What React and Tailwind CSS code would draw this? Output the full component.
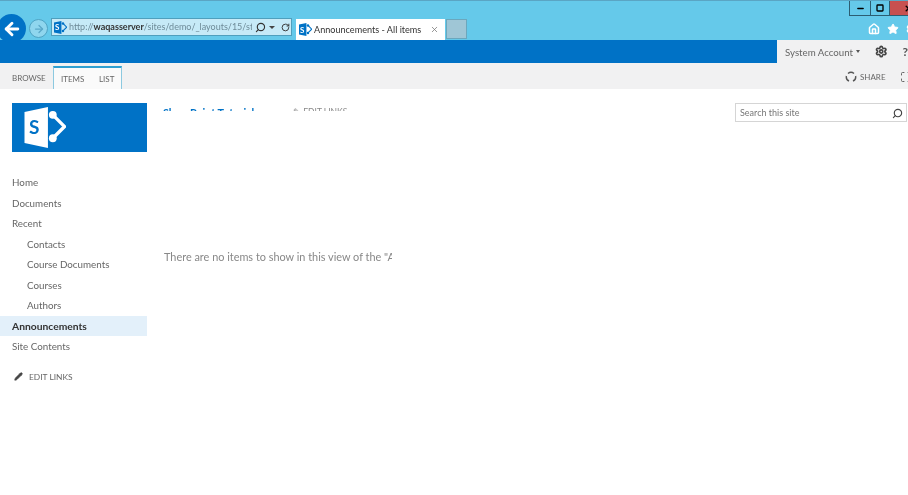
import React from "react";
import { ArrowLeft, ArrowRight, Search, RotateCw, X, Home, Star, Settings, Pencil, Minus, Square, Maximize } from "lucide-react";

const SpIcon = ({ className }) => (
  <svg viewBox="0 0 42 42" className={className}>
    <path d="M0 5 L24 0 V42 L0 37 Z" fill="currentColor" />
    <path d="M29 8 L41 20 L29 32" fill="none" stroke="currentColor" strokeWidth="3.4" />
    <circle cx="29" cy="8" r="4" fill="currentColor" />
    <circle cx="29" cy="32" r="4" fill="currentColor" />
  </svg>
);

const SmallSp = () => (
  <div className="relative w-[13px] h-[13px] text-[#0072c6] shrink-0">
    <SpIcon className="w-[13px] h-[13px]" />
    <span className="absolute left-[1px] top-[1.5px] text-[8px] leading-[10px] font-bold text-white">S</span>
  </div>
);

const NavItem = ({ children, sub, active }) => (
  <div className={`h-[20.5px] pt-px flex items-center ${sub ? "pl-[27px]" : "pl-[12px]"} ${active ? "bg-[#e3f0fa] font-bold text-[#333] text-[10.3px]" : "text-[#666] text-[9.8px]"}`}>
    {children}
  </div>
);

export default function App() {
  return (
    <div className="w-[908px] h-[495px] overflow-hidden bg-white flex flex-col blur-[0.4px]" style={{ fontFamily: 'Lato, "Open Sans", "Liberation Sans", sans-serif' }}>
      {/* browser chrome */}
      <div className="h-[40px] bg-[#65c9ea] border-t border-[#5aa5c4] flex items-end relative shrink-0">
        <div className="absolute left-[-3px] top-[13px] w-[29px] h-[29px] rounded-full bg-[#0072c6] flex items-center justify-center">
          <ArrowLeft className="w-[20px] h-[20px] text-white" strokeWidth={3.4} />
        </div>
        <div className="absolute left-[29px] top-[18px] w-[19px] h-[19px] rounded-full border border-[#4fa4c4] bg-[#8fd6ee] flex items-center justify-center">
          <ArrowRight className="w-[12px] h-[12px] text-[#5aa8c8]" strokeWidth={2.5} />
        </div>
        <div className="ml-[51px] mb-[3px] w-[241px] h-[18px] border border-[#4f9fbd] bg-[#c6eaf7] flex items-center pl-[2px] pr-[1px] relative top-[-1px]">
          <SmallSp />
          <span className="ml-[2px] text-[9px] leading-[14px] text-[#6e8b98] whitespace-nowrap overflow-hidden w-[184px]">
            http://<b className="text-[#333]">waqasserver</b>/sites/demo/_layouts/15/st
          </span>
          <Search className="w-[11px] h-[11px] text-[#333] -scale-x-100 ml-[3px]" strokeWidth={2.5} />
          <span className="ml-[3px] w-0 h-0 border-x-[3px] border-x-transparent border-t-[3px] border-t-[#444]" />
          <RotateCw className="w-[9px] h-[9px] text-[#333] ml-[6px]" strokeWidth={2.5} />
        </div>
        <div className="ml-[4px] w-[149px] h-[21px] bg-white flex items-center pl-[3px] pr-[6px]">
          <SmallSp />
          <span className="ml-[2px] text-[9.1px] leading-[14px] text-[#333] whitespace-nowrap flex-1 overflow-hidden">Announcements - All items</span>
          <X className="w-[9px] h-[9px] text-[#777]" strokeWidth={2} />
        </div>
        <div className="ml-[1px] mb-[1px] w-[21px] h-[20px] bg-[#9fc6d6] border border-[#6ba7bd]" />
        {/* window controls */}
        <div className="absolute left-[849px] top-0 flex h-[15px] border-b border-[#2c5d72]">
          <div className="w-[22px] border-x border-[#2c5d72] flex items-center justify-center"><Minus className="w-[9px] h-[9px] text-black" strokeWidth={4} /></div>
          <div className="w-[19px] border-r border-[#2c5d72] flex items-center justify-center"><Square className="w-[8px] h-[8px] text-black" strokeWidth={4} /></div>
          <div className="w-[36px] bg-[#c75050] flex items-center justify-center"><X className="w-[9px] h-[9px] text-black" strokeWidth={4} /></div>
        </div>
        <div className="absolute left-[868px] top-[22px] flex items-center gap-[7px]">
          <Home className="w-[12px] h-[12px] text-white" strokeWidth={3} />
          <Star className="w-[12px] h-[12px] text-white fill-white" />
          <Settings className="w-[12px] h-[12px] text-white" strokeWidth={3} />
        </div>
      </div>
      {/* suite bar */}
      <div className="h-[23px] bg-[#0072c6] flex justify-end shrink-0">
        <div className="w-[131px] bg-[#f1f1f2] flex items-center text-[#666] pl-[8px]">
          <span className="text-[9.7px] leading-[14px] whitespace-nowrap w-[69px]">System Account</span>
          <span className="ml-[3px] w-0 h-0 border-x-[2.5px] border-x-transparent border-t-[3px] border-t-[#555]" />
          <Settings className="ml-[15px] w-[13px] h-[13px] text-[#444]" strokeWidth={3.2} />
          <span className="ml-[15px] text-[12px] leading-[14px] font-bold text-[#555]">?</span>
        </div>
      </div>
      {/* ribbon */}
      <div className="h-[26px] bg-[#f1f1f2] flex items-end relative shrink-0">
        <span className="ml-[12px] mb-[5px] w-[41px] text-[8px] leading-[12px] text-[#666]">BROWSE</span>
        <div className="h-[23px] w-[69px] bg-[#fafafa] border-x border-[#8cc9e0] border-t-2 border-t-[#2f9fd0] flex items-center text-[8px] leading-[12px] text-[#666]">
          <span className="ml-[7px] w-[38px]">ITEMS</span>
          <span>LIST</span>
        </div>
        <div className="absolute left-[845px] top-[8px] flex items-center">
          <svg viewBox="0 0 12 12" className="w-[12px] h-[12px]" fill="none" stroke="#555" strokeWidth="1.4"><path d="M3 2.5A4.6 4.6 0 0 1 9 2.5M10.6 5A4.6 4.6 0 0 1 8 10M4 10A4.6 4.6 0 0 1 1.4 5" /></svg>
          <span className="ml-[3px] w-[28px] text-[8px] leading-[12px] text-[#666]">SHARE</span>
          <Maximize className="ml-[12px] w-[12px] h-[12px] text-[#666]" strokeWidth={2} />
        </div>
      </div>
      {/* body */}
      <div className="flex flex-1 min-h-0">
        <aside className="w-[147px] shrink-0 pt-[14px]">
          <div className="ml-[12px] h-[49px] bg-[#0072c6] relative">
            <SpIcon className="absolute left-[12px] top-[4px] w-[42px] h-[41px] text-white" />
            <span className="absolute left-[17px] top-[12px] text-[19px] leading-[24px] font-bold text-[#0072c6]">S</span>
          </div>
          <nav className="mt-[20px]">
            <NavItem>Home</NavItem>
            <NavItem>Documents</NavItem>
            <NavItem>Recent</NavItem>
            <NavItem sub>Contacts</NavItem>
            <NavItem sub>Course Documents</NavItem>
            <NavItem sub>Courses</NavItem>
            <NavItem sub>Authors</NavItem>
            <NavItem active>Announcements</NavItem>
            <NavItem>Site Contents</NavItem>
          </nav>
          <div className="mt-[14px] ml-[14px] flex items-center text-[8.4px] leading-[12px] text-[#666]">
            <Pencil className="w-[9px] h-[9px] text-[#444] fill-[#444]" />
            <span className="ml-[6px]">EDIT LINKS</span>
          </div>
        </aside>
        <main className="flex-1 relative min-w-0">
          <div className="flex items-start justify-between h-[33px]">
            <div className="ml-[16px] mt-[18px] h-[4px] overflow-hidden flex items-start whitespace-nowrap">
              <span className="text-[10.8px] leading-[11px] font-bold text-[#0072c6] w-[130px]">SharePoint Tutorials</span>
              <span className="text-[8.5px] leading-[11px] text-[#888]">✎ EDIT LINKS</span>
            </div>
            <div className="mt-[14px] mr-[1px] w-[172px] h-[19px] border border-[#d5d5d5] flex items-center justify-between pl-[4px] pr-[3px] pt-px text-[9px] leading-[12px] text-[#777]">
              <span>Search this site</span>
              <Search className="w-[11px] h-[11px] text-[#444] -scale-x-100" strokeWidth={2.5} />
            </div>
          </div>
          <div className="mt-[126px] ml-[17px] w-[228px] overflow-hidden whitespace-nowrap text-[10.9px] leading-[18px] text-[#888]">
            There are no items to show in this view of the "Announcements" list.
          </div>
        </main>
      </div>
    </div>
  );
}
